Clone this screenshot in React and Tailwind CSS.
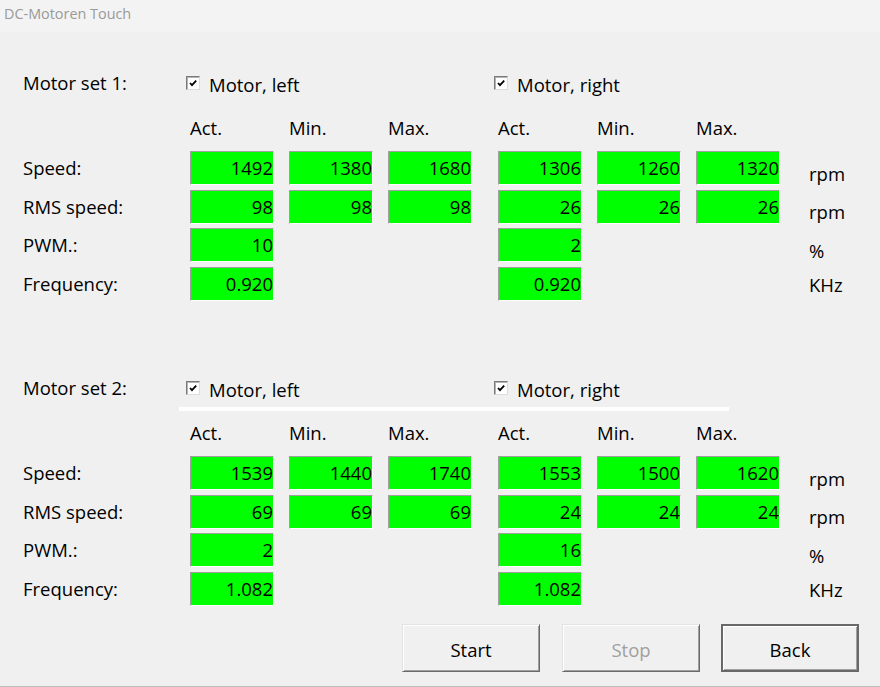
import React from 'react';

const motorSets = [
  {
    title: 'Motor set 1:',
    left: { speed: ['1492', '1380', '1680'], rms: ['98', '98', '98'], pwm: '10', freq: '0.920' },
    right: { speed: ['1306', '1260', '1320'], rms: ['26', '26', '26'], pwm: '2', freq: '0.920' },
  },
  {
    title: 'Motor set 2:',
    left: { speed: ['1539', '1440', '1740'], rms: ['69', '69', '69'], pwm: '2', freq: '1.082' },
    right: { speed: ['1553', '1500', '1620'], rms: ['24', '24', '24'], pwm: '16', freq: '1.082' },
    divider: true,
  },
];

const Checkbox = ({ label }) => (
  <div className="flex items-start">
    <div className="mt-[5px] flex h-[14px] w-[14px] items-center justify-center border border-t-[#7a7a7a] border-l-[#7a7a7a] border-r-[#dcdcdc] border-b-[#dcdcdc] bg-white shadow-[inset_1px_1px_0_#b4b4b4]">
      <svg width="10" height="10" viewBox="0 0 10 10">
        <path d="M2 5 L4 7.2 L8.2 2.6" fill="none" stroke="#000" strokeWidth="1.8" />
      </svg>
    </div>
    <span className="ml-[9px] pt-[2px] leading-[24px]">{label}</span>
  </div>
);

const Value = ({ value }) => {
  if (value === undefined) {
    return <div className="w-[84px]" />;
  }
  return (
    <div className="h-[34px] w-[84px] border border-t-[#a0a0a0] border-l-[#a0a0a0] border-r-white border-b-white bg-[#00ff00] text-right leading-[32px] text-black">
      {value}
    </div>
  );
};

const DataRow = ({ label, left, right, unit, unitOffset }) => (
  <div className="flex h-[34px]">
    <div className="w-[167px] leading-[34px]">{label}</div>
    <div className="flex gap-[15px]">
      <Value value={left[0]} />
      <Value value={left[1]} />
      <Value value={left[2]} />
    </div>
    <div className="ml-[26px] flex gap-[15px]">
      <Value value={right[0]} />
      <Value value={right[1]} />
      <Value value={right[2]} />
    </div>
    <div className={`ml-[29px] leading-[34px] ${unitOffset}`}>{unit}</div>
  </div>
);

const HeaderCell = ({ children }) => <div className="w-[84px]">{children}</div>;

const MotorSet = ({ set, className }) => (
  <div className={className}>
    <div className="flex h-[24px] leading-[24px]">
      <div className="w-[163px]">{set.title}</div>
      <div className="w-[308px]">
        <Checkbox label="Motor, left" />
      </div>
      <Checkbox label="Motor, right" />
    </div>
    {set.divider ? (
      <div className="ml-[156px] mt-[7px] h-[4px] w-[550px] bg-white" />
    ) : null}
    <div className={`flex h-[24px] leading-[24px] ${set.divider ? 'mt-[10px]' : 'mt-[21px]'}`}>
      <div className="w-[167px]" />
      <div className="flex gap-[15px]">
        <HeaderCell>Act.</HeaderCell>
        <HeaderCell>Min.</HeaderCell>
        <HeaderCell>Max.</HeaderCell>
      </div>
      <div className="ml-[26px] flex gap-[15px]">
        <HeaderCell>Act.</HeaderCell>
        <HeaderCell>Min.</HeaderCell>
        <HeaderCell>Max.</HeaderCell>
      </div>
    </div>
    <div className="mt-[11px] flex flex-col">
      <DataRow label="Speed:" left={set.left.speed} right={set.right.speed} unit="rpm" unitOffset="pt-[6px]" />
      <div className="mt-[5px]">
        <DataRow label="RMS speed:" left={set.left.rms} right={set.right.rms} unit="rpm" unitOffset="pt-[5px]" />
      </div>
      <div className="mt-[4px]">
        <DataRow label="PWM.:" left={[set.left.pwm]} right={[set.right.pwm]} unit="%" unitOffset="pt-[6px]" />
      </div>
      <div className="mt-[5px]">
        <DataRow label="Frequency:" left={[set.left.freq]} right={[set.right.freq]} unit="KHz" unitOffset="pt-[1px]" />
      </div>
    </div>
  </div>
);

const WinButton = ({ children, disabled, isDefault }) => (
  <button
    disabled={disabled}
    className={`h-[48px] w-[138px] bg-[#f0f0f0] pt-[4px] ${
      isDefault
        ? 'border-2 border-[#686868] shadow-[inset_1px_1px_0_#fff,inset_-1px_-1px_0_#a0a0a0]'
        : 'border border-t-[#e3e3e3] border-l-[#e3e3e3] border-r-[#696969] border-b-[#696969] shadow-[inset_1px_1px_0_#fff,inset_-1px_-1px_0_#a0a0a0]'
    } ${disabled ? 'text-[#a0a0a0]' : 'text-black'}`}
  >
    {children}
  </button>
);

export default function App() {
  return (
    <div className="flex h-[687px] w-[880px] flex-col overflow-hidden border-b border-[#bdbdbd] bg-[#f0f0f0] font-['Open_Sans',sans-serif] text-[18.5px] text-[#000]">
      <div className="h-[32px] shrink-0 bg-[#f3f3f3] pl-[4px] pt-[4px] text-[14.4px] leading-[20px] text-[#999999]">
        DC-Motoren Touch
      </div>
      <div className="flex flex-col pl-[23px]">
        <MotorSet set={motorSets[0]} className="mt-[39px]" />
        <MotorSet set={motorSets[1]} className="mt-[75px]" />
        <div className="ml-[379px] mt-[18px] flex gap-[22px]">
          <WinButton>Start</WinButton>
          <WinButton disabled>Stop</WinButton>
          <div className="-ml-[1px]">
            <WinButton isDefault>Back</WinButton>
          </div>
        </div>
      </div>
    </div>
  );
}
